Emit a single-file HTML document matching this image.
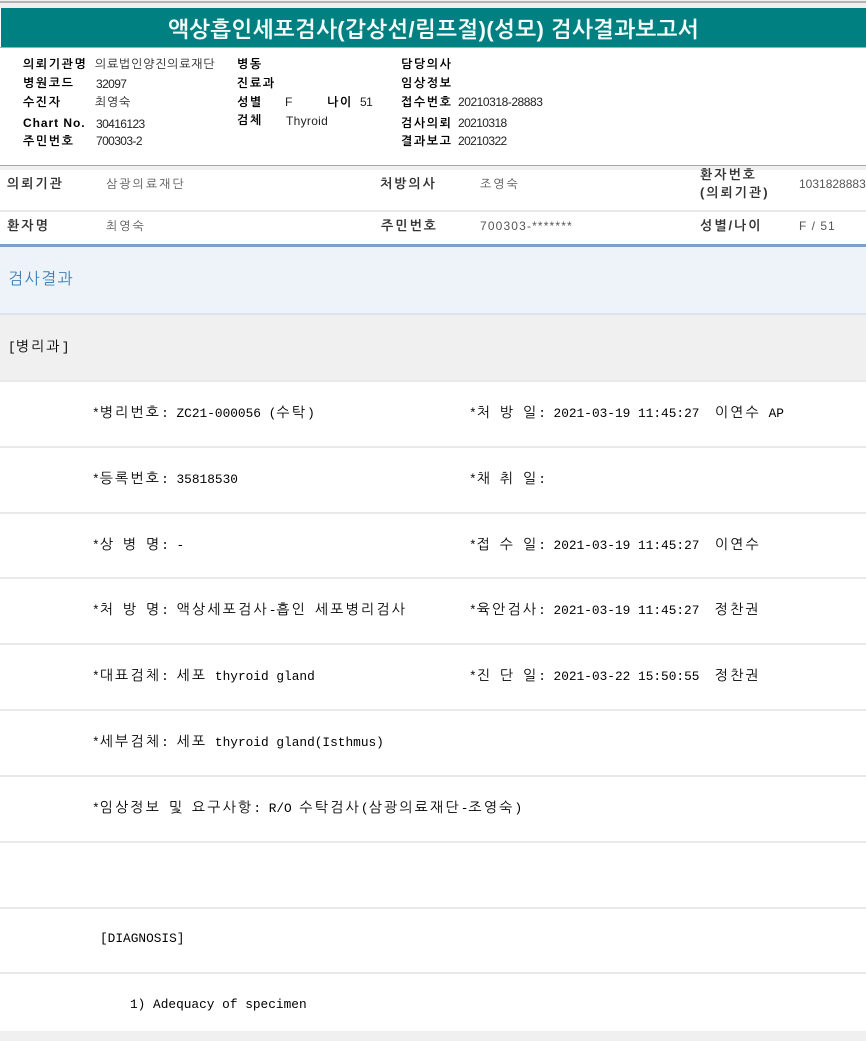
<!DOCTYPE html>
<html lang="ko"><head><meta charset="utf-8"><style>
html,body{margin:0;padding:0;background:#fff}
#p{position:relative;width:866px;height:1041px;overflow:hidden;background:#fff;font-family:"Liberation Sans","NanumGothic","Noto Sans CJK KR",sans-serif;color:#000}
#p div{position:absolute;white-space:pre}
.b{background:#e9e9e9;left:0;width:866px;height:2px}
.l{font-size:12px;font-weight:bold;line-height:14px;letter-spacing:1.6px}
.v{font-size:12px;line-height:14px;color:#222;letter-spacing:.75px}
.n{font-size:12px;line-height:14px;color:#222;letter-spacing:-.6px}
.k{font-size:13px;font-weight:bold;line-height:16px;color:#333;letter-spacing:2px}
.g{font-size:12px;line-height:16px;color:#555;letter-spacing:2px}
.m{font-family:"Liberation Mono","NanumGothic","Noto Sans CJK KR",monospace;font-size:12.8px;line-height:18px;color:#000}
.m i{font-style:normal;font-family:"NanumGothic","Noto Sans CJK KR",sans-serif;font-size:14px;letter-spacing:2.2px}
</style></head><body><div id="p">
<div style="left:0;top:0;width:866px;height:8px;background:#f0f0f0"></div>
<div style="left:0;top:1px;width:866px;height:2px;background:#b4b4b4"></div>
<div style="left:1px;top:8px;width:865px;height:39px;background:#008080"></div>
<div style="left:0;top:47px;width:866px;height:1px;background:#8fb5b5"></div>
<div style="left:1px;top:8px;width:865px;height:39px;line-height:43px;text-align:center;color:#f4fbfb;font-size:22px;font-weight:bold;letter-spacing:.47px">액상흡인세포검사(갑상선/림프절)(성모) 검사결과보고서</div>

<div class="l" style="left:23px;top:57px">의뢰기관명</div><div class="v" style="left:95px;top:57px">의료법인양진의료재단</div>
<div class="l" style="left:23px;top:76px">병원코드</div><div class="n" style="left:96px;top:77px">32097</div>
<div class="l" style="left:23px;top:95px">수진자</div><div class="v" style="left:95px;top:95px">최영숙</div>
<div class="l" style="left:23px;top:116px;letter-spacing:.95px">Chart No.</div><div class="n" style="left:96px;top:117px">30416123</div>
<div class="l" style="left:23px;top:134px">주민번호</div><div class="n" style="left:96px;top:134px">700303-2</div>

<div class="l" style="left:237px;top:57px">병동</div>
<div class="l" style="left:237px;top:76px">진료과</div>
<div class="l" style="left:237px;top:95px">성별</div><div class="v" style="left:285px;top:95px">F</div>
<div class="l" style="left:327px;top:95px">나이</div><div class="n" style="left:360px;top:95px">51</div>
<div class="l" style="left:237px;top:113px">검체</div><div class="v" style="left:286px;top:114px;letter-spacing:.3px">Thyroid</div>

<div class="l" style="left:401px;top:57px">담당의사</div>
<div class="l" style="left:401px;top:76px">임상정보</div>
<div class="l" style="left:401px;top:95px">접수번호</div><div class="n" style="left:458px;top:95px;letter-spacing:-.45px">20210318-28883</div>
<div class="l" style="left:401px;top:116px">검사의뢰</div><div class="n" style="left:458px;top:116px">20210318</div>
<div class="l" style="left:401px;top:134px">결과보고</div><div class="n" style="left:458px;top:134px">20210322</div>

<div style="left:0;top:165px;width:866px;height:5px;background:#f0f0f0"></div>
<div style="left:0;top:165px;width:866px;height:1px;background:#a8a8a8"></div>

<div class="k" style="left:7px;top:176px">의뢰기관</div><div class="g" style="left:106px;top:176px">삼광의료재단</div>
<div class="k" style="left:380px;top:176px">처방의사</div><div class="g" style="left:480px;top:176px">조영숙</div>
<div class="k" style="left:700px;top:167px">환자번호</div><div class="k" style="left:700px;top:185px">(의뢰기관)</div><div class="g" style="left:799px;top:176px;letter-spacing:0">1031828883</div>
<div class="b" style="top:210px"></div>
<div class="k" style="left:7px;top:218px">환자명</div><div class="g" style="left:106px;top:218px">최영숙</div>
<div class="k" style="left:381px;top:218px">주민번호</div><div class="g" style="left:480px;top:218px;letter-spacing:1.15px">700303-*******</div>
<div class="k" style="left:700px;top:218px">성별/나이</div><div class="g" style="left:799px;top:218px;letter-spacing:1px">F / 51</div>

<div style="left:0;top:244px;width:866px;height:3px;background:#7f9fca"></div>
<div style="left:0;top:247px;width:866px;height:66px;background:#edf3f9"></div>
<div style="left:0;top:313px;width:866px;height:2px;background:#dde3ef"></div>
<div style="left:8px;top:271px;font-size:16px;line-height:18px;color:#3f7fb5;letter-spacing:1.5px">검사결과</div>
<div style="left:0;top:315px;width:866px;height:65px;background:#f0f0f0"></div>
<div class="b" style="top:380px"></div>
<div class="m" style="left:8px;top:338px">[<i>병리과</i>]</div>

<div class="m" style="left:92px;top:404px">*<i>병리번호</i>: ZC21-000056 (<i>수탁</i>)</div>
<div class="m" style="left:469px;top:404px">*<i>처</i> <i>방</i> <i>일</i>: 2021-03-19 11:45:27  <i>이연수</i> AP</div>
<div class="b" style="top:446px"></div>
<div class="m" style="left:92px;top:470px">*<i>등록번호</i>: 35818530</div>
<div class="m" style="left:469px;top:470px">*<i>채</i> <i>취</i> <i>일</i>:</div>
<div class="b" style="top:512px"></div>
<div class="m" style="left:92px;top:536px">*<i>상</i> <i>병</i> <i>명</i>: -</div>
<div class="m" style="left:469px;top:536px">*<i>접</i> <i>수</i> <i>일</i>: 2021-03-19 11:45:27  <i>이연수</i></div>
<div class="b" style="top:577px"></div>
<div class="m" style="left:92px;top:601px">*<i>처</i> <i>방</i> <i>명</i>: <i>액상세포검사</i>-<i>흡인</i> <i>세포병리검사</i></div>
<div class="m" style="left:469px;top:601px">*<i>육안검사</i>: 2021-03-19 11:45:27  <i>정찬권</i></div>
<div class="b" style="top:643px"></div>
<div class="m" style="left:92px;top:667px">*<i>대표검체</i>: <i>세포</i> thyroid gland</div>
<div class="m" style="left:469px;top:667px">*<i>진</i> <i>단</i> <i>일</i>: 2021-03-22 15:50:55  <i>정찬권</i></div>
<div class="b" style="top:709px"></div>
<div class="m" style="left:92px;top:733px">*<i>세부검체</i>: <i>세포</i> thyroid gland(Isthmus)</div>
<div class="b" style="top:775px"></div>
<div class="m" style="left:92px;top:799px">*<i>임상정보</i> <i>및</i> <i>요구사항</i>: R/O <i>수탁검사</i>(<i>삼광의료재단</i>-<i>조영숙</i>)</div>
<div class="b" style="top:841px"></div>
<div class="b" style="top:907px"></div>
<div class="m" style="left:100px;top:930px">[DIAGNOSIS]</div>
<div class="b" style="top:972px"></div>
<div class="m" style="left:130px;top:996px">1) Adequacy of specimen</div>
<div style="left:0;top:1031px;width:866px;height:10px;background:#f0f0f0"></div>
</div></body></html>
